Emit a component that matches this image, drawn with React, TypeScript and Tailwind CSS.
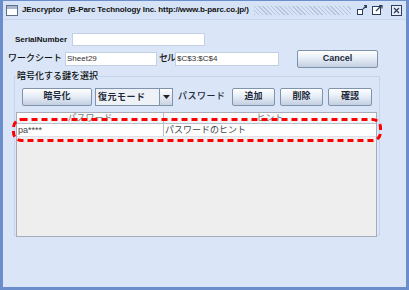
import React from "react";

const jp = { fontFamily: '"Liberation Sans", "Noto Sans CJK JP", sans-serif' };

function Btn({ w, children, className = "" }: { w: string; children: React.ReactNode; className?: string }) {
  return (
    <div
      className={`${w} h-[18px] flex items-center justify-center rounded-[2px] border border-[#8093ad] bg-[linear-gradient(#ffffff,#e6edf6_45%,#c3cfe0)] text-[9px] font-bold text-[#1e2a3a] whitespace-nowrap ${className}`}
      style={jp}
    >
      {children}
    </div>
  );
}

export default function App() {
  return (
    <div
      className="relative w-[409px] h-[290px] flex flex-col bg-[#dae6f8] border-l-[3px] border-r-[3px] border-b-[3px] border-t-[1px] border-[#6b8dcc] overflow-hidden"
      style={jp}
    >
      {/* title bar */}
      <div className="h-[19px] flex items-center bg-[#d6e3f6] border-b border-[#c9d7ee]">
        <div className="ml-[3px] w-[12px] h-[11px] border border-[#5d6f8c] bg-white flex flex-col">
          <div className="h-[3px] bg-[#a9b7cc]" />
        </div>
        <div className="ml-[4px] text-[8px] font-bold text-[#111] whitespace-pre tracking-[-0.1px]">
          JEncryptor  (B-Parc Technology Inc. http://www.b-parc.co.jp/)
        </div>
        <div className="flex-1 h-[9px] ml-[5px] mr-[6px] bg-[repeating-linear-gradient(45deg,#b7c6de_0px,#b7c6de_1px,transparent_1px,transparent_3px)]" />
        <div className="flex items-center gap-[5px] mr-[4px]">
          <svg width="10" height="10" viewBox="0 0 10 10">
            <rect x="0.5" y="4.5" width="5" height="5" fill="#fff" stroke="#2d3f5c" />
            <path d="M6 4 L9.5 0.5 M7 0.5 H9.5 V3" stroke="#2d3f5c" strokeWidth="1.2" fill="none" />
          </svg>
          <svg width="11" height="10" viewBox="0 0 11 10">
            <rect x="0.5" y="1.5" width="8" height="8" fill="#fff" stroke="#2d3f5c" />
            <path d="M4 6 L9.5 0.5 M7 0.5 H10 V3.5" stroke="#2d3f5c" strokeWidth="1.2" fill="none" />
          </svg>
          <svg width="11" height="11" viewBox="0 0 11 11" className="ml-[3px]">
            <rect x="0.5" y="0.5" width="10" height="10" fill="#e8eef8" stroke="#2d3f5c" />
            <path d="M3 3 L8 8 M8 3 L3 8" stroke="#2d3f5c" strokeWidth="1.3" />
          </svg>
        </div>
      </div>

      {/* SerialNumber row */}
      <div className="mt-[13px] flex items-center h-[13px] pl-[12px]">
        <div className="w-[57px] text-[8px] font-bold text-[#111] whitespace-nowrap">SerialNumber</div>
        <div className="w-[133px] h-[13px] bg-white border border-[#c3d0e3]" />
      </div>

      {/* worksheet row */}
      <div className="mt-[4px] flex items-center h-[17px] pl-[5px]">
        <div className="w-[57px] text-[9px] font-medium text-[#111] whitespace-nowrap">ワークシート</div>
        <div className="w-[92px] h-[14px] bg-white border border-[#c3d0e3] text-[8px] text-[#333] leading-[12px] pl-[1px]">Sheet29</div>
        <div className="w-[18px] text-[9px] font-medium text-[#111] pl-[2px] whitespace-nowrap tracking-[-1px]">セル</div>
        <div className="w-[104px] h-[14px] bg-white border border-[#c3d0e3] text-[8px] text-[#333] leading-[12px] pl-[1px]">$C$3:$C$4</div>
        <Btn w="w-[81px] ml-[18px]" className="h-[17px] text-[8px]">Cancel</Btn>
      </div>

      {/* group */}
      <fieldset className="ml-[11px] mt-[3px] w-[366px] h-[166px] border border-[#c6d5ec] m-0 p-0">
        <legend className="ml-[2px] px-0 text-[9px] font-medium leading-[12px] text-[#111] whitespace-nowrap">暗号化する鍵を選択</legend>
        <div className="flex flex-col">
          <div className="mt-[6px] ml-[7px] flex items-center">
            <Btn w="w-[70px]">暗号化</Btn>
            <div className="ml-[3px] w-[78px] h-[18px] flex border border-[#8093ad] bg-[#eef2f7]">
              <div className="flex-1 text-[9px] font-bold text-[#1e2a3a] leading-[16px] pl-[2px] tracking-[0.5px] whitespace-nowrap">復元モード</div>
              <div className="w-[13px] h-full border-l border-[#8093ad] bg-[linear-gradient(#ffffff,#c9d4e3)] flex items-center justify-center">
                <svg width="7" height="4" viewBox="0 0 7 4"><path d="M0 0 H7 L3.5 4 Z" fill="#222" /></svg>
              </div>
            </div>
            <div className="ml-[5px] w-[54px] text-[9px] font-medium text-[#1e2a3a] tracking-[0.5px] whitespace-nowrap">パスワード</div>
            <Btn w="w-[43px]" className="text-[8px]">追加</Btn>
            <Btn w="w-[43px] ml-[5px]" className="text-[8px]">削除</Btn>
            <Btn w="w-[44px] ml-[5px]" className="text-[8px]">確認</Btn>
          </div>
          <div className="mt-[6px] ml-[1px] w-[361px] h-[125px] border border-[#a6adb8] bg-[#eeeeee] flex flex-col">
            <div className="h-[11px] flex bg-[linear-gradient(#ffffff,#eef1f5)] border-b border-[#b9c0cb] text-[9px] text-[#777] leading-[10px]">
              <div className="w-[147px] border-r border-[#b9c0cb] text-center">パスワード</div>
              <div className="flex-1 text-center">ヒント</div>
            </div>
            <div className="h-[13px] flex bg-white border-b border-[#dde2ea] text-[9px] text-[#444] leading-[12px]">
              <div className="w-[147px] border-r border-[#b9c0cb] pl-[1px]">pa****</div>
              <div className="flex-1 pl-[1px]">パスワードのヒント</div>
            </div>
          </div>
        </div>
      </fieldset>

      {/* red dashed annotation */}
      <svg className="absolute left-[9px] top-[117px]" width="371" height="25" viewBox="0 0 371 25">
        <rect x="1.5" y="1.5" width="367" height="21" rx="8" fill="none" stroke="#ff0000" strokeWidth="3" strokeDasharray="6 4" />
      </svg>
    </div>
  );
}
